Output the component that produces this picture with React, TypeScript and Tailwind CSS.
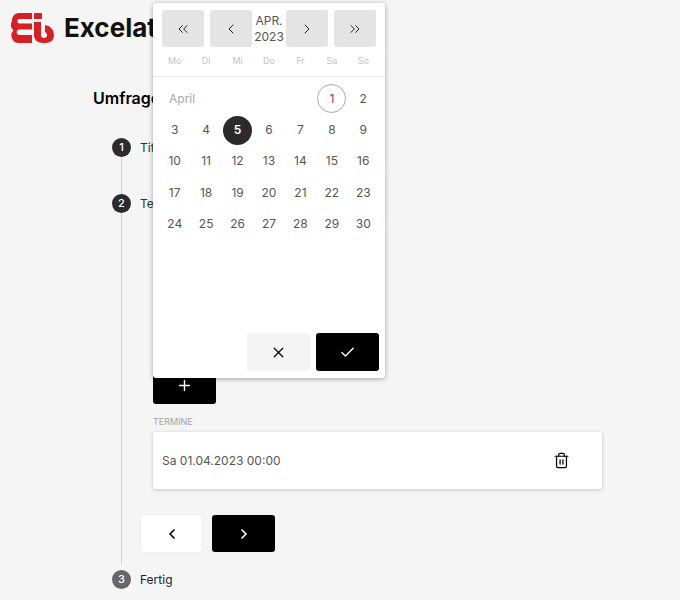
import React from 'react';
import { Check, ChevronLeft, ChevronRight, ChevronsLeft, ChevronsRight, Plus, Trash2, X } from 'lucide-react';

const weekdays = ['Mo', 'Di', 'Mi', 'Do', 'Fr', 'Sa', 'So'];
const days = Array.from({ length: 30 }, (_, i) => i + 1);

const Logo = () => (
  <svg width="44" height="32" viewBox="0 0 44 32" fill="#d81f26">
    <path d="M7 1h14v6H8.5a2.2 2.2 0 0 0 0 4.4H21v6H8.5a2.8 2.8 0 0 0 0 5.6H21v8H8a7.5 7.5 0 0 1-5.5-12.7A7.5 7.5 0 0 1 1 9 8 8 0 0 1 7 1z" />
    <rect x="23" y="1" width="8" height="6" rx="0.5" />
    <path d="M23 10h7v13a3 3 0 0 0 6 0c0-1.500-.8-2.500-2-3v-7a10 10 0 0 1 9 10c0 6-4.500 8-9 8h-2c-5 0-9-3-9-8z" />
  </svg>
);

const StepDot = ({ n, muted }: { n: number; muted?: boolean }) => (
  <div className={`flex h-[19px] w-[19px] shrink-0 items-center justify-center rounded-full text-[11px] font-medium text-white ${muted ? 'bg-[#666666]' : 'bg-[#2b2b2b]'}`}>
    {n}
  </div>
);

const NavBtn = ({ children }: { children: React.ReactNode }) => (
  <button className="flex h-[37px] w-[42px] items-center justify-center rounded-[3px] bg-[#e4e4e4] text-[#222]">
    {children}
  </button>
);

const DatePopup = () => (
  <div className="absolute left-[153px] top-[3px] flex h-[375px] w-[232px] flex-col rounded-[3px] bg-white shadow-[0_1px_5px_rgba(0,0,0,0.35)]">
    <div className="flex items-center justify-between px-[9px] pt-[7px]">
      <NavBtn><ChevronsLeft size={16} strokeWidth={1.5} /></NavBtn>
      <div className="flex flex-1 items-center gap-0 pl-[6px]">
        <NavBtn><ChevronLeft size={16} strokeWidth={1.5} /></NavBtn>
        <div className="w-[34px] text-center text-[12px] leading-[16px] text-[#555]">APR.<br />2023</div>
        <NavBtn><ChevronRight size={16} strokeWidth={1.5} /></NavBtn>
      </div>
      <NavBtn><ChevronsRight size={16} strokeWidth={1.5} /></NavBtn>
    </div>
    <div className="grid grid-cols-7 border-b border-[#e8e8e8] px-[6px] pb-[9px] pt-[8px] text-center text-[9px] leading-[12px] text-[#c4c4c4]">
      {weekdays.map(d => <div key={d}>{d}</div>)}
    </div>
    <div className="grid grid-cols-7 grid-rows-[repeat(5,31.4px)] px-[6px] pt-[6px] text-[12px] text-[#555]">
      <div className="col-span-5 flex items-center pl-[10px] text-[#a8a8a8]">April</div>
      {days.map(d => (
        <div key={d} className="flex items-center justify-center">
          <span className={`flex h-[29px] w-[29px] items-center justify-center rounded-full ${d === 1 ? 'border border-[#aaa]' : ''} ${d === 5 ? 'bg-[#2b2b2b] font-semibold text-white' : ''}`}>{d}</span>
        </div>
      ))}
    </div>
    <div className="mt-auto flex justify-end gap-[6px] px-[6px] pb-[7px]">
      <button className="flex h-[38px] w-[63px] items-center justify-center rounded-[3px] bg-[#f4f4f4] text-black"><X size={17} strokeWidth={1.75} /></button>
      <button className="flex h-[38px] w-[63px] items-center justify-center rounded-[3px] bg-black text-white"><Check size={17} strokeWidth={2} /></button>
    </div>
  </div>
);

export default function App() {
  return (
    <div className="relative h-[600px] w-[680px] overflow-hidden bg-[#f5f5f5] font-['Inter',sans-serif]">
      <header className="flex items-center gap-[9px] pl-[11px] pt-[12px]">
        <Logo />
        <span className="text-[26px] font-bold leading-[32px] text-[#111]">Excelator</span>
      </header>

      <main className="pl-[93px] pt-[42px]">
        <h1 className="text-[16px] font-semibold leading-[24px] text-black">Umfrage erstellen</h1>
        <div className="pl-[19px] pt-[28px]">
          <div className="flex items-center gap-[9px] text-[12px] text-[#1d3a1d]">
            <StepDot n={1} />
            <span>Titel</span>
          </div>
          <div className="ml-[9px] h-[37px] w-px bg-[#d0d0d0]" />
          <div className="flex items-center gap-[9px] text-[12px] text-[#1d3a1d]">
            <StepDot n={2} />
            <span>Termine</span>
          </div>
          <div className="ml-[9px] border-l border-[#d0d0d0] pl-[31px]">
            <div className="pl-[-1px]">
              <div className="pt-[154px]">
                <button className="flex h-[37px] w-[63px] items-center justify-center rounded-[3px] bg-black text-white"><Plus size={17} strokeWidth={2} /></button>
              </div>
              <div className="pt-[12px] text-[9px] leading-[12px] text-[#a3a3a3]">TERMINE</div>
              <div className="mt-[4px] flex h-[57px] w-[449px] items-center justify-between rounded-[2px] bg-white pl-[9px] pr-[32px] text-[12px] text-[#555] shadow-[0_1px_4px_rgba(0,0,0,0.2)]">
                <span>Sa 01.04.2023 00:00</span>
                <Trash2 size={17} strokeWidth={1.75} className="text-black" />
              </div>
            </div>
            <div className="-ml-[12px] flex gap-[10px] pb-[12px] pt-[26px]">
              <button className="flex h-[37px] w-[61px] items-center justify-center rounded-[3px] bg-white text-black shadow-[0_0_1px_rgba(0,0,0,0.2)]"><ChevronLeft size={16} strokeWidth={2.5} /></button>
              <button className="flex h-[37px] w-[63px] items-center justify-center rounded-[3px] bg-black text-white"><ChevronRight size={16} strokeWidth={2.5} /></button>
            </div>
          </div>
          <div className="flex items-center gap-[9px] pt-[6px] text-[12px] text-[#222]">
            <StepDot n={3} muted />
            <span>Fertig</span>
          </div>
        </div>
      </main>

      <DatePopup />
    </div>
  );
}
